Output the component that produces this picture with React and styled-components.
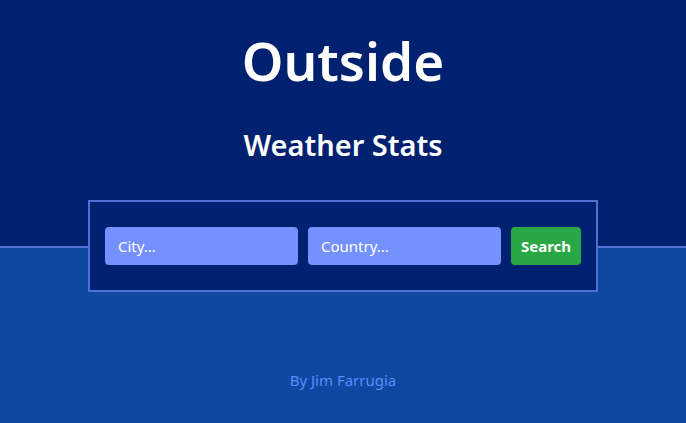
import React from "react";
import styled, { createGlobalStyle } from "styled-components";

const GlobalStyle = createGlobalStyle`
	html, body {
		margin: 0;
		padding: 0;
		background: #0e48a1;
		font-family: "Noto Sans", "Open Sans", sans-serif;
	}

	* {
		box-sizing: border-box;
	}
`;

export default function App() {
	return (
		<Page>
			<GlobalStyle />
			<Header>
				<Title>Outside</Title>
				<Subtitle>Weather Stats</Subtitle>
			</Header>
			<SearchCard>
				<SearchInput type="text" placeholder="City..." />
				<SearchInput type="text" placeholder="Country..." />
				<SearchButton>Search</SearchButton>
			</SearchCard>
			<Footer>
				By <Author>Jim Farrugia</Author>
			</Footer>
		</Page>
	);
}

const Page = styled.div`
	display: flex;
	flex-direction: column;
	align-items: center;
	min-height: 423px;
	background: #0e48a1;
`;

const Header = styled.header`
	width: 100%;
	height: 248px;
	background: #002070;
	border-bottom: 2px solid #5273d6;
	display: flex;
	flex-direction: column;
	align-items: center;
	color: #fff;
`;

const Title = styled.h1`
	margin: 26px 0 0;
	font-size: 53px;
	font-weight: 600;
	line-height: 70px;
`;

const Subtitle = styled.h2`
	margin: 29px 0 0;
	font-size: 29px;
	font-weight: 600;
	line-height: 40px;
`;

const SearchCard = styled.div`
	margin-top: -48px;
	width: 510px;
	display: flex;
	gap: 10px;
	padding: 25px 15px 25px 15px;
	background: #002070;
	border: 2px solid #4d6fd6;
`;

const SearchInput = styled.input`
	flex: 1;
	min-width: 0;
	height: 38px;
	padding: 0 13px;
	border: none;
	border-radius: 4px;
	background: #7590ff;
	color: #fff;
	font-family: inherit;
	font-size: 15px;
	outline: none;

	&::placeholder {
		color: #fff;
		opacity: 1;
	}
`;

const SearchButton = styled.button`
	width: 70px;
	height: 38px;
	border: none;
	border-radius: 4px;
	background: #28a745;
	color: #fff;
	font-family: inherit;
	font-size: 15px;
	font-weight: 700;
	cursor: pointer;
`;

const Footer = styled.footer`
	margin-top: 78px;
	color: #5b8cff;
	font-size: 15px;
	line-height: 20px;
`;

const Author = styled.span`
	color: #5b8cff;
`;
